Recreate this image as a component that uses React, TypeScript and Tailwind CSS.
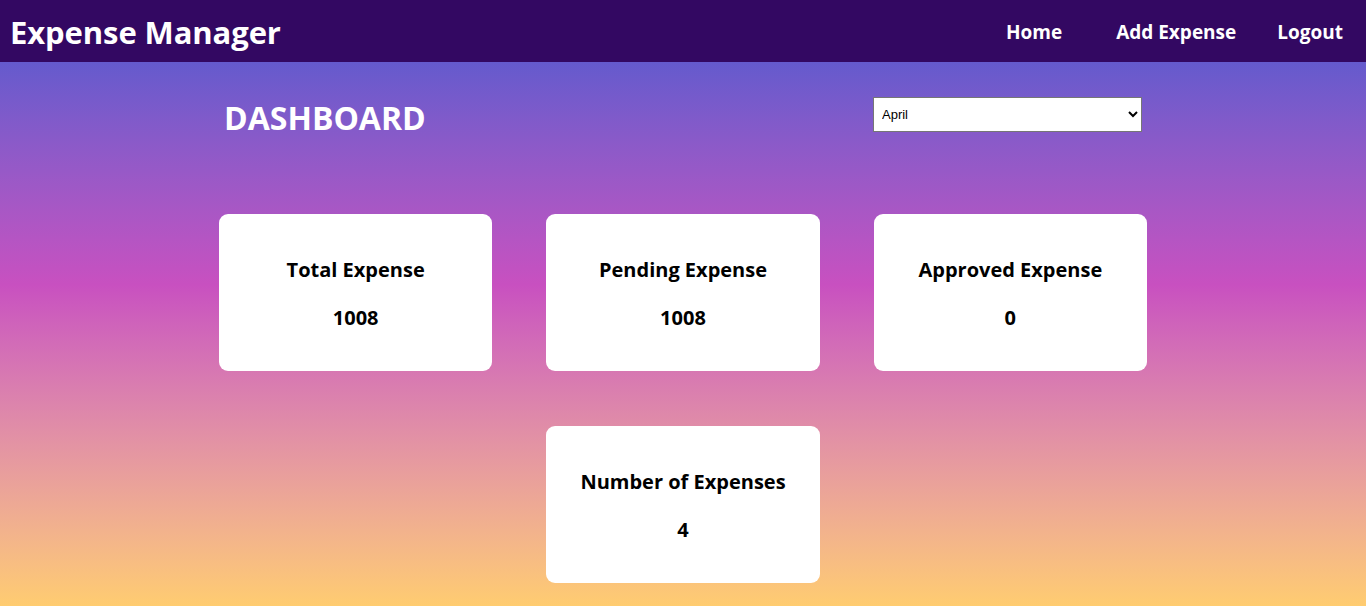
import React from "react";

const cards = [
  { title: "Total Expense", value: "1008" },
  { title: "Pending Expense", value: "1008" },
  { title: "Approved Expense", value: "0" },
];

function StatCard({ title, value }: { title: string; value: string }) {
  return (
    <div className="flex h-[157px] flex-col items-center justify-center gap-[22px] rounded-[9px] bg-white pt-[3px] text-black">
      <h3 className="text-[20px] font-bold leading-[26px]">{title}</h3>
      <p className="text-[20px] font-bold leading-[26px]">{value}</p>
    </div>
  );
}

export default function App() {
  return (
    <div
      className="min-h-[606px] w-full bg-gradient-to-b from-[#4158d0] via-[#c850c0] via-47% to-[#ffcc70]"
      style={{ fontFamily: '"Open Sans", "Noto Sans", sans-serif' }}
    >
      <nav className="flex h-[62px] items-center justify-between bg-[#330862] px-[10px] text-white">
        <h1 className="text-[31px] font-bold leading-[44px] tracking-[-0.1px] mt-[2px]">Expense Manager</h1>
        <ul className="flex items-center text-[19px] font-bold mt-[2px]">
          <li className="mr-[54px] ml-[2px]">Home</li>
          <li className="mr-[41px]">Add Expense</li>
          <li className="mr-[13px]">Logout</li>
        </ul>
      </nav>

      <main className="mx-auto w-[928px] pb-[23px]">
        <div className="flex items-start justify-between pl-[5px] pr-[5px] pt-[35px]">
          <h2 className="text-[32px] font-bold leading-[42px] text-white">DASHBOARD</h2>
          <select
            defaultValue="April"
            className="h-[35px] w-[269px] border border-[#767676] bg-white px-[4px] text-[13px] text-black"
            style={{ fontFamily: '"Liberation Sans", Arial, sans-serif' }}
          >
            <option>January</option>
            <option>February</option>
            <option>March</option>
            <option>April</option>
            <option>May</option>
          </select>
        </div>

        <div className="mt-[75px] grid grid-cols-3 gap-x-[54px] gap-y-[55px]">
          {cards.map((c) => (
            <StatCard key={c.title} title={c.title} value={c.value} />
          ))}
          <div />
          <StatCard title="Number of Expenses" value="4" />
        </div>
      </main>
    </div>
  );
}
